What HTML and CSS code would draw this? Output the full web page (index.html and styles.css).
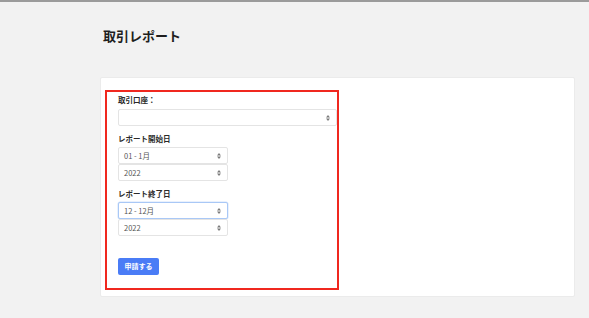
FILE: index.html
```html
<!DOCTYPE html>
<html lang="ja">
<head>
<meta charset="utf-8">
<title>取引レポート</title>
<link rel="stylesheet" href="styles.css">
</head>
<body>
<div class="page">
  <h1 class="title">取引レポート</h1>
  <div class="card">
    <form class="form">
      <div class="label">取引口座：</div>
      <div class="select wide"><span class="val"></span><svg class="arrow" width="4" height="6" viewBox="0 0 4 6"><path d="M2 0L4 2.5H0Z M2 6L4 3.5H0Z"/></svg></div>

      <div class="label gap">レポート開始日</div>
      <div class="select"><span class="val">01 - 1月</span><svg class="arrow" width="4" height="6" viewBox="0 0 4 6"><path d="M2 0L4 2.5H0Z M2 6L4 3.5H0Z"/></svg></div>
      <div class="select"><span class="val">2022</span><svg class="arrow" width="4" height="6" viewBox="0 0 4 6"><path d="M2 0L4 2.5H0Z M2 6L4 3.5H0Z"/></svg></div>

      <div class="label gap">レポート終了日</div>
      <div class="select focus"><span class="val">12 - 12月</span><svg class="arrow" width="4" height="6" viewBox="0 0 4 6"><path d="M2 0L4 2.5H0Z M2 6L4 3.5H0Z"/></svg></div>
      <div class="select"><span class="val">2022</span><svg class="arrow" width="4" height="6" viewBox="0 0 4 6"><path d="M2 0L4 2.5H0Z M2 6L4 3.5H0Z"/></svg></div>

      <button type="button" class="btn">申請する</button>
    </form>
  </div>
</div>
</body>
</html>
```

FILE: styles.css
```css
html, body {
  margin: 0;
  padding: 0;
}
body {
  background: #f2f2f2;
  border-top: 2px solid #9b9b9b;
  font-family: "Noto Sans CJK JP", "Noto Sans", sans-serif;
  color: #222;
  height: 316px;
  overflow: hidden;
}
.page {
  margin-left: 100px;
  width: 475px;
}
.title {
  margin: 0;
  padding: 25px 0 0 3px;
  font-size: 13px;
  line-height: 18px;
  font-weight: 700;
  color: #1e1e1e;
  height: 50px;
  box-sizing: border-box;
}
.card {
  margin-top: 25px;
  background: #fff;
  border: 1px solid #ebebeb;
  border-radius: 2px;
  height: 220px;
  box-sizing: border-box;
  padding: 12px 0 0 4px;
}
.form {
  width: 234px;
  height: 200px;
  box-sizing: border-box;
  border: 2px solid #f0281f;
  padding: 3px 0 0 11px;
  display: flex;
  flex-direction: column;
  align-items: flex-start;
}
.label {
  font-size: 7.5px;
  line-height: 10px;
  font-weight: 700;
  color: #2a2a2a;
  margin-bottom: 4px;
}
.label.gap {
  margin-top: 8px;
  margin-bottom: 3px;
}
.select {
  width: 110px;
  height: 17px;
  box-sizing: border-box;
  border: 1px solid #e4e4e4;
  border-radius: 2px;
  background: #fff;
  display: flex;
  align-items: center;
  justify-content: space-between;
  padding: 0 6px 0 5px;
  font-size: 7.5px;
  color: #555;
}
.select.wide {
  width: 219px;
}
.select.focus {
  border-color: #a9c8f6;
  box-shadow: 0 0 0 0.5px #d4e4fb;
}
.arrow {
  fill: #7a7a7a;
}
.btn {
  margin-top: 22px;
  width: 41px;
  height: 17px;
  border: 0;
  border-radius: 2px;
  background: #4a7cf6;
  color: #fff;
  font-family: inherit;
  font-size: 7px;
  font-weight: 700;
  padding: 0;
  line-height: 17px;
}
```
